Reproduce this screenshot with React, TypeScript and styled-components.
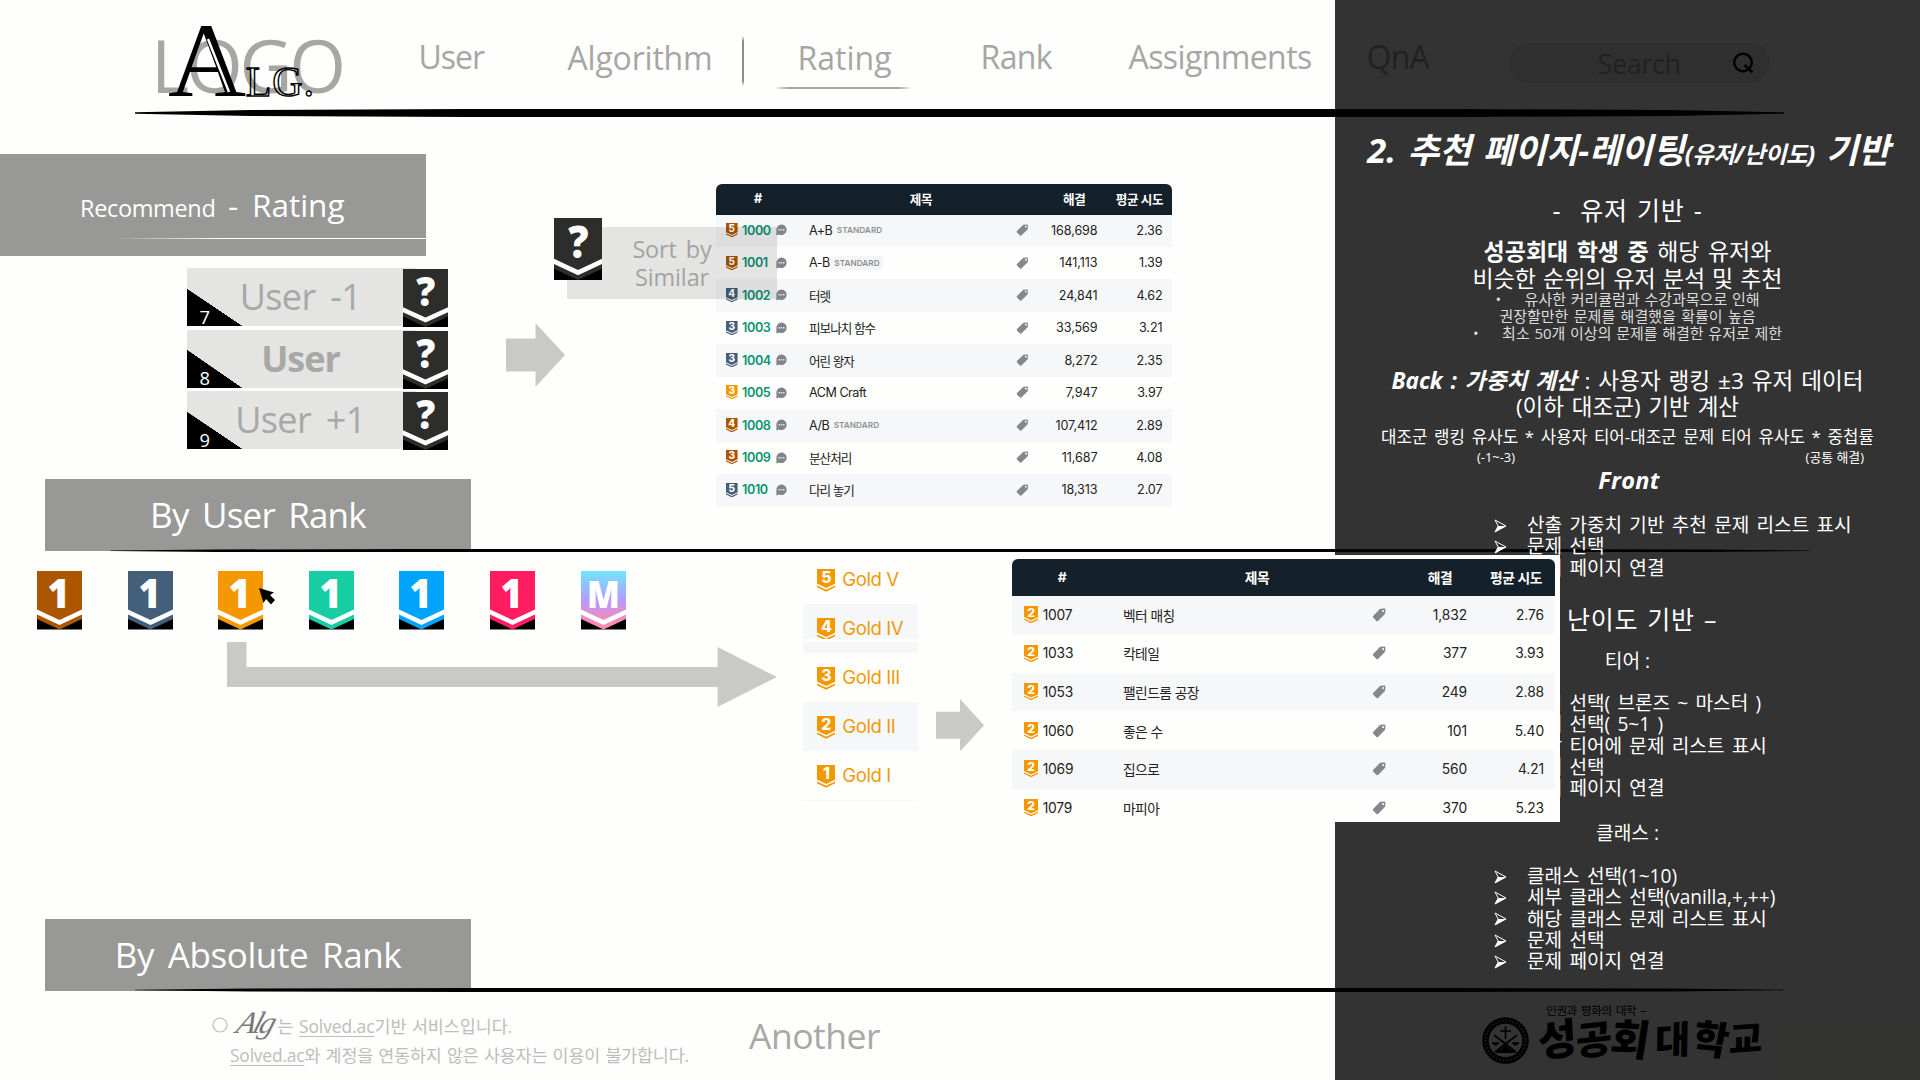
import React from "react";
import styled, { createGlobalStyle } from "styled-components";

const latin = `"Open Sans", "Noto Sans CJK KR", sans-serif`;
const inter = `Inter, "Noto Sans CJK KR", sans-serif`;

const Global = createGlobalStyle`
  * { box-sizing: border-box; }
  body { margin: 0; background: #fefefc; font-family: ${latin}; }
  svg { display: block; flex: none; }
`;

const Slide = styled.div`
  position: relative;
  width: 1920px;
  height: 1080px;
  overflow: hidden;
  background: #fefefc;
  display: flex;
  flex-direction: column;
`;

/* ---------- header ---------- */
const Header = styled.header`
  height: 109px;
  flex: none;
  display: flex;
  align-items: flex-start;
  padding-left: 151px;
`;
const Logo = styled.div`
  position: relative;
  width: 200px;
  height: 109px;
  color: #a6a6a5;
  font-size: 73px;
  line-height: 130px;
  letter-spacing: -3.2px;
  white-space: nowrap;
`;
const LogoMark = styled.div`
  position: absolute;
  left: 17px;
  top: 0;
  display: flex;
  align-items: baseline;
  font-family: "Liberation Serif", serif;
  color: #000;
  line-height: 122px;
  letter-spacing: 0;
`;
const BigA = styled.span`
  font-size: 105px;
  transform: scaleX(1.03);
  transform-origin: left;
`;
const SmallCaps = styled.span`
  font-size: 42px;
  margin-left: 2px;
  letter-spacing: 0.8px;
  color: transparent;
  -webkit-text-stroke: 1.4px #000;
`;
const MarkInline = styled.svg`
  position: absolute;
  left: 32px;
  top: 31px;
`;
const NavItem = styled.a<{ $w: number; $gap: number; $ls?: number; $y?: number }>`
  width: ${(p) => p.$w}px;
  margin-left: ${(p) => p.$gap}px;
  padding-top: ${(p) => 36 + (p.$y ?? 0)}px;
  line-height: 41px;
  font-size: 32px;
  letter-spacing: ${(p) => p.$ls ?? 0}px;
  color: #a6a6a5;
  white-space: nowrap;
`;
const NavDivider = styled.div`
  width: 2px;
  height: 50px;
  margin: 36px 0 0 30px;
  background: linear-gradient(transparent, #8c8c8b 10%, #8c8c8b 90%, transparent);
`;
const ActiveLine = styled.div`
  width: 138px;
  height: 2px;
  margin: 9px 0 0 -24px;
  background: linear-gradient(90deg, transparent, #a6a6a5 10%, #a6a6a5 90%, transparent);
`;
const SearchBox = styled.div`
  width: 261px;
  height: 40px;
  margin: 43px 0 0 76px;
  border-radius: 20px;
  background: #ececeb;
  display: flex;
  align-items: center;
  justify-content: space-between;
  padding: 0 16px 0 89px;
  font-size: 27px;
  letter-spacing: -0.4px;
  color: #a6a6a5;
`;

const Rule: React.FC<{ left: number; width: number; h: number; taper: number }> = ({ left, width, h, taper }) => (
  <RuleSvg $left={left} width={width} height={h} viewBox={`0 0 ${width} ${h}`}>
    <path
      d={`M0 ${h * 0.42} L${taper * 0.35} ${h * 0.14} L${taper} 0 H${width - taper} L${width - taper * 0.35} ${h * 0.14} L${width} ${h * 0.42} V${h * 0.58} L${width - taper * 0.35} ${h * 0.86} L${width - taper} ${h} H${taper} L${taper * 0.35} ${h * 0.86} L0 ${h * 0.58} Z`}
    />
  </RuleSvg>
);
const RuleSvg = styled.svg<{ $left: number }>`
  margin-left: ${(p) => p.$left}px;
`;

/* ---------- banners ---------- */
const PageBanner = styled.div`
  width: 426px;
  height: 102px;
  background: #989896;
  color: #fff;
  display: flex;
  flex-direction: column;
  white-space: nowrap;
`;
const BannerTitle = styled.div`
  display: flex;
  align-items: baseline;
  padding: 31px 0 0 80px;
  font-size: 31.5px;
  line-height: 40px;
`;
const BannerLead = styled.span`
  font-size: 23.5px;
  letter-spacing: -0.35px;
  width: 148px;
`;
const BannerDash = styled.span`
  width: 24px;
`;
const BannerLine = styled.div`
  width: 314px;
  height: 1px;
  margin: 10px 0 0 112px;
  background: linear-gradient(90deg, transparent, #fff 35%);
`;
const SectionBanner = styled.div<{ $ls: number; $ws: number }>`
  width: 426px;
  height: 72px;
  margin-left: 45px;
  flex: none;
  background: #989896;
  color: #fff;
  font-size: 35px;
  line-height: 72px;
  text-align: center;
  letter-spacing: ${(p) => p.$ls}px;
  word-spacing: ${(p) => p.$ws}px;
  white-space: nowrap;
`;

/* ---------- recommendation by user ---------- */
const TopSection = styled.section`
  height: 395px;
  margin-top: 37px;
  flex: none;
  display: flex;
  align-items: flex-start;
`;
const TopLeft = styled.div`
  width: 471px;
  display: flex;
  flex-direction: column;
`;
const UserList = styled.div`
  display: flex;
  flex-direction: column;
  gap: 3.5px;
  margin: 12px 0 30px 187px;
`;
const UserRow = styled.div`
  width: 261px;
  height: 58px;
  display: flex;
  background: linear-gradient(90deg, #e4e4e2 229px, transparent 229px);
`;
const RankCorner = styled.div`
  width: 55px;
  height: 37.5px;
  margin-top: 20.5px;
  background: linear-gradient(to top right, #000 50%, transparent 50.5%);
  color: #fff;
  font-size: 18.4px;
  line-height: 22px;
  padding: 17px 0 0 12.5px;
`;
const UserName = styled.div<{ $strong?: boolean }>`
  width: 161px;
  margin: 0 24px 0 -24px;
  padding-left: 4px;
  text-align: center;
  font-size: 36px;
  line-height: 58px;
  letter-spacing: ${(p) => (p.$strong ? -1 : -0.6)}px;
  word-spacing: 6px;
  font-weight: ${(p) => (p.$strong ? 700 : 400)};
  color: #a8a8a6;
  white-space: nowrap;
`;
const BadgeSlot = styled.div`
  padding-top: 1px;
`;
const SimilarCol = styled.div`
  position: relative;
  width: 245px;
  padding-top: 64px;
`;
const SimilarBadge = styled.div`
  position: relative;
  z-index: 2;
  margin: 0 0 43px 83px;
`;
const SortCard = styled.div`
  position: absolute;
  z-index: 1;
  left: 96px;
  top: 73px;
  width: 210px;
  height: 72px;
  padding: 8px 0 0 0;
  background: rgba(0, 0, 0, 0.1);
  color: #a3a3a2;
  font-size: 23.4px;
  line-height: 28px;
  letter-spacing: -0.1px;
  text-align: center;
  word-spacing: 3px;
`;
const ArrowSlot = styled.div<{ $l?: number; $t?: number }>`
  margin: ${(p) => p.$t ?? 0}px 0 0 ${(p) => p.$l ?? 0}px;
`;

/* ---------- problem tables ---------- */
const Table = styled.div<{ $cols: string; $fs: number; $mt?: number }>`
  display: grid;
  grid-template-columns: ${(p) => p.$cols};
  margin-top: ${(p) => p.$mt ?? 0}px;
  border-radius: 6px 6px 0 0;
  overflow: hidden;
  font-family: ${inter};
  font-size: ${(p) => p.$fs}px;
  color: #222;
  white-space: nowrap;
`;
const Row = styled.div<{ $h: number; $head?: boolean; $shade?: boolean }>`
  grid-column: 1 / -1;
  display: grid;
  grid-template-columns: subgrid;
  align-items: center;
  height: ${(p) => p.$h}px;
  padding-bottom: ${(p) => (p.$head ? 1 : 0.5)}px;
  background: ${(p) => (p.$head ? "#14202a" : p.$shade ? "#f6f7f9" : "transparent")};
  color: ${(p) => (p.$head ? "#fff" : "inherit")};
  font-weight: ${(p) => (p.$head ? 700 : 400)};
`;
const HeadCell = styled.div<{ $l?: number; $r?: number }>`
  text-align: center;
  padding-left: ${(p) => p.$l ?? 0}px;
  padding-right: ${(p) => p.$r ?? 0}px;
  letter-spacing: -0.4px;
`;
const IdCell = styled.div<{ $pad: number; $gap: number }>`
  display: flex;
  align-items: center;
  gap: ${(p) => p.$gap}px;
  padding-left: ${(p) => p.$pad}px;
`;
const SolvedId = styled.span`
  width: 29px;
  color: #0a9373;
  font-weight: 600;
  letter-spacing: -0.4px;
`;
const PlainId = styled.span`
  letter-spacing: -0.2px;
`;
const TitleCell = styled.div<{ $ls: number }>`
  display: flex;
  align-items: center;
  gap: 1.5px;
  letter-spacing: ${(p) => p.$ls}px;
`;
const Std = styled.span<{ $boxed?: boolean }>`
  padding: 2px 3px;
  border-radius: 3px;
  background: ${(p) => (p.$boxed ? "#f4f5f7" : "transparent")};
  color: #8d8f93;
  font-size: 8.2px;
  font-weight: 600;
  letter-spacing: 0.05px;
  line-height: 10px;
`;
const NumCell = styled.div<{ $pad: number }>`
  text-align: right;
  padding-right: ${(p) => p.$pad}px;
  letter-spacing: -0.1px;
`;

/* ---------- recommendation by tier ---------- */
const TierSection = styled.section`
  height: 366px;
  flex: none;
  display: flex;
  align-items: flex-start;
`;
const TierLeft = styled.div`
  width: 803px;
  padding-top: 18px;
`;
const TierRow = styled.div`
  position: relative;
  display: flex;
  gap: 45.6px;
  padding-left: 37px;
`;
const Cursor = styled.svg`
  position: absolute;
  left: 258px;
  top: 16px;
`;
const GoldList = styled.div`
  width: 115px;
  padding-top: 2px;
  border-bottom: 1px solid #f8f8f8;
`;
const GoldRow = styled.div<{ $shade?: boolean; $cut?: boolean }>`
  height: 49.1px;
  display: flex;
  gap: 7px;
  padding: 14px 0 0 14px;
  background: ${(p) =>
    p.$cut
      ? "linear-gradient(#f6f7f9 35px, #fefefc 35px, #fefefc 37.5px, #f7f7f8 37.5px)"
      : p.$shade
        ? "#f6f7f9"
        : "transparent"};
  font-family: ${inter};
  font-size: 18.6px;
  line-height: 20px;
  letter-spacing: -0.45px;
  color: #ef9b0d;
  white-space: nowrap;
`;
const GoldBadge = styled.div<{ $cut?: boolean }>`
  height: ${(p) => (p.$cut ? 21 : 23)}px;
  overflow: hidden;
`;
const TableCard = styled.div`
  position: relative;
  z-index: 3;
  width: 552.4px;
  height: 267px;
  margin: 2px 0 0 24px;
  padding: 4px 5px 0 4px;
  background: #fefefc;
  overflow: hidden;
`;

/* ---------- footer ---------- */
const RuleOverlap = styled.div<{ $up: number; $h: number }>`
  position: relative;
  height: ${(p) => p.$h}px;
  margin-top: ${(p) => -p.$up}px;
  flex: none;
`;
const Footer = styled.footer`
  display: flex;
  height: 88px;
  align-items: flex-start;
`;
const Notice = styled.div`
  width: 749px;
  padding: 19.5px 0 0 212px;
  font-size: 17.4px;
  line-height: 29px;
  color: #bdbdbb;
  white-space: nowrap;
`;
const NoticeLine = styled.div<{ $indent?: number; $ls: number }>`
  display: flex;
  align-items: baseline;
  height: 29px;
  padding-left: ${(p) => p.$indent ?? 0}px;
  letter-spacing: ${(p) => p.$ls}px;
  word-spacing: 1px;
`;
const Ring = styled.svg`
  align-self: center;
  margin: -2px 10px 0 0;
`;
const Script = styled.span`
  width: 39.5px;
  font-family: "Liberation Serif", serif;
  font-style: italic;
  font-size: 31px;
  line-height: 20px;
  letter-spacing: -2.5px;
  color: #7a7a78;
  transform: skewX(-18deg);
`;
const Link = styled.span`
  text-decoration: underline;
  text-underline-offset: 3px;
`;
const Another = styled.div`
  width: 733px;
  padding-top: 22px;
  font-size: 35.5px;
  line-height: 42px;
  letter-spacing: -0.5px;
  color: #a8a8a6;
`;
const School = styled.div`
  display: flex;
  padding-top: 12px;
  gap: 9px;
`;
const SchoolText = styled.div`
  color: #000;
  white-space: nowrap;
`;
const SchoolMotto = styled.div`
  padding-left: 8px;
  font-size: 11.8px;
  line-height: 13px;
  letter-spacing: -0.7px;
  word-spacing: 2px;
  color: #000;
`;
const SchoolName = styled.div`
  display: flex;
  align-items: center;
  height: 44px;
  font-weight: 900;
  line-height: 44px;
  transform: skewX(-5deg);
`;
const Brush = styled.span<{ $fs: number; $rot: number; $w: number }>`
  width: ${(p) => p.$w}px;
  font-size: ${(p) => p.$fs}px;
  transform: rotate(${(p) => p.$rot}deg);
`;

/* ---------- side notes ---------- */
const Notes = styled.aside`
  position: absolute;
  z-index: 2;
  right: 0;
  top: 0;
  width: 585px;
  height: 1080px;
  padding-top: 129px;
  background: rgba(0, 0, 0, 0.8);
  color: #fff;
  text-align: center;
  white-space: pre;
`;
const Line = styled.div<{ $fs: number; $lh: number; $mt?: number; $ls?: number; $ws?: number; $x?: number; $dim?: boolean }>`
  margin-top: ${(p) => p.$mt ?? 0}px;
  padding-left: ${(p) => p.$x ?? 0}px;
  font-size: ${(p) => p.$fs}px;
  line-height: ${(p) => p.$lh}px;
  height: ${(p) => p.$lh}px;
  letter-spacing: ${(p) => p.$ls ?? 0}px;
  word-spacing: ${(p) => p.$ws ?? 0}px;
  color: ${(p) => (p.$dim ? "#dcdcdb" : "#fff")};
`;
const Em = styled.span<{ $fs?: number }>`
  font-weight: 700;
  font-style: italic;
  ${(p) => p.$fs && `font-size: ${p.$fs}px; letter-spacing: -0.4px;`}
`;
const SubNotes = styled.div`
  display: flex;
  justify-content: space-between;
  height: 18px;
  padding: 0 56px 0 142px;
  font-size: 12.9px;
  line-height: 17px;
`;
const List = styled.ul<{ $mt: number; $pitch: number }>`
  list-style: none;
  margin: ${(p) => p.$mt}px 0 0;
  padding: 0 0 0 159px;
  font-size: 19.1px;
  line-height: ${(p) => p.$pitch}px;
  text-align: left;
  word-spacing: 2.3px;
`;
const Item = styled.li`
  display: flex;
  align-items: center;
  gap: 20px;
`;

const Tip = () => (
  <svg width="13" height="14" viewBox="0 0 13 14">
    <path d="M1 1 L12 7 L1 13 L4.2 7 Z" fill="none" stroke="#fff" strokeWidth="1" />
    <path d="M12 7 L1 13 L4.2 7 Z" fill="#fff" />
  </svg>
);

const Bullets: React.FC<{ mt: number; pitch: number; items: string[] }> = ({ mt, pitch, items }) => (
  <List $mt={mt} $pitch={pitch}>
    {items.map((t) => (
      <Item key={t}>
        <Tip />
        {t}
      </Item>
    ))}
  </List>
);

/* ---------- drawings ---------- */
const badgeLabel: Record<string, { size: number; weight: number; x: number }> = {
  "1": { size: 41, weight: 800, x: 21.5 },
  "?": { size: 41, weight: 800, x: 22.8 },
  M: { size: 37, weight: 800, x: 22.5 },
};

const TierBadge: React.FC<{ fill: string; label: string; w?: number; h?: number }> = ({
  fill,
  label,
  w = 45,
  h = 58.5,
}) => (
  <svg width={w} height={h} viewBox="0 0 45 58.5" preserveAspectRatio="none">
    <defs>
      <linearGradient id="master" x1="0" y1="0" x2="0" y2="1">
        <stop offset="0" stopColor="#6fe6ff" />
        <stop offset="0.5" stopColor="#b39bff" />
        <stop offset="0.8" stopColor="#f08cc0" />
        <stop offset="1" stopColor="#ff8aa8" />
      </linearGradient>
    </defs>
    <rect y="30" width="45" height="28.5" fill="#000" />
    <path d="M0 0H45V48L22.5 58.5L0 48Z" fill={fill} />
    <path d="M0 38.5L22.5 49L45 38.5V43.5L22.5 54L0 43.5Z" fill="#fff" />
    <text
      x={badgeLabel[label].x / 0.92}
      y="37.3"
      transform="scale(0.92 1)"
      textAnchor="middle"
      fontFamily="Open Sans, sans-serif"
      fontWeight={badgeLabel[label].weight}
      fontSize={badgeLabel[label].size}
      fill="#fff"
    >
      {label}
    </text>
  </svg>
);

const MiniBadge: React.FC<{ fill: string; n: number; w: number; h: number }> = ({ fill, n, w, h }) => (
  <svg width={w} height={h} viewBox="0 0 18 23" preserveAspectRatio="none">
    <path d="M0 0H18V14.6L9 19L0 14.6Z" fill={fill} />
    <path d="M0 16.4L9 20.8L18 16.4V18.2L9 22.8L0 18.2Z" fill={fill} />
    <text x="9" y="14.4" textAnchor="middle" fontFamily="Inter, sans-serif" fontWeight="800" fontSize="15.5" fill="#fff">
      {n}
    </text>
  </svg>
);

const TagIcon = styled.svg<{ $dx: number }>`
  margin-left: ${(p) => p.$dx}px;
`;
const Tag: React.FC<{ s: number; dx: number }> = ({ s, dx }) => (
  <TagIcon $dx={dx} width={s} height={s} viewBox="0 0 13 13">
    <path
      fillRule="evenodd"
      d="M7.6 0.8 L11.4 0.5 Q12.5 0.5 12.5 1.6 L12.2 5.4 L5.6 12 Q4.9 12.6 4.2 12 L1 8.8 Q0.4 8.1 1 7.4 Z M10.3 1.8 a0.95 0.95 0 1 0 0.01 0Z"
      fill="#85878c"
    />
  </TagIcon>
);

const Bubble = () => (
  <svg width="11" height="12" viewBox="0 0 11 12">
    <path d="M5.5 0.5a5.2 5.2 0 1 1-2.3 9.9L0.4 11.4V5.7A5.2 5.2 0 0 1 5.5 0.5Z" fill="#818389" />
    <path d="M2.6 5.1h1.5v1.5H2.6zM4.8 5.1h1.5v1.5H4.8zM7 5.1h1.5v1.5H7z" fill="#e4e4e6" />
  </svg>
);

const BlockArrow: React.FC<{ w: number; h: number; shaft: number }> = ({ w, h, shaft }) => (
  <svg width={w} height={h} viewBox={`0 0 ${w} ${h}`}>
    <path
      d={`M0 ${(h - shaft) / 2}H${w / 2}V0L${w} ${h / 2}L${w / 2} ${h}V${(h + shaft) / 2}H0Z`}
      fill="#c9c9c8"
    />
  </svg>
);

const BRONZE = "#ad5600";
const SILVER = "#435f7a";
const GOLD = "#f39800";

type Solved = [string, number, number, string, string, string, (0 | 1 | 2)?];
const solved: Solved[] = [
  [BRONZE, 5, 1000, "A+B", "168,698", "2.36", 1],
  [BRONZE, 5, 1001, "A-B", "141,113", "1.39", 2],
  [SILVER, 4, 1002, "터렛", "24,841", "4.62"],
  [SILVER, 3, 1003, "피보나치 함수", "33,569", "3.21"],
  [SILVER, 3, 1004, "어린 왕자", "8,272", "2.35"],
  [GOLD, 3, 1005, "ACM Craft", "7,947", "3.97"],
  [BRONZE, 4, 1008, "A/B", "107,412", "2.89", 1],
  [BRONZE, 3, 1009, "분산처리", "11,687", "4.08"],
  [SILVER, 5, 1010, "다리 놓기", "18,313", "2.07"],
];

const goldProblems: [number, string, string, string][] = [
  [1007, "벡터 매칭", "1,832", "2.76"],
  [1033, "칵테일", "377", "3.93"],
  [1053, "팰린드롬 공장", "249", "2.88"],
  [1060, "좋은 수", "101", "5.40"],
  [1069, "집으로", "560", "4.21"],
  [1079, "마피아", "370", "5.23"],
];

const users: [number, string][] = [
  [7, "User -1"],
  [8, "User"],
  [9, "User +1"],
];

const tiers: [string, string][] = [
  [BRONZE, "1"],
  [SILVER, "1"],
  [GOLD, "1"],
  ["#17cda4", "1"],
  ["#00a4fc", "1"],
  ["#ff1c60", "1"],
  ["url(#master)", "M"],
];

const golds: [number, string][] = [
  [5, "V"],
  [4, "IV"],
  [3, "III"],
  [2, "II"],
  [1, "I"],
];

const schoolGlyphs: [string, number, number, number][] = [
  ["성", 42, -8, 38],
  ["공", 39, -6, 35],
  ["회", 42, 4, 44],
  ["대", 38, -4, 38],
  ["학", 39, 6, 36],
  ["교", 36, -4, 34],
];

const Seal = () => (
  <svg width="47" height="47" viewBox="0 0 47 47">
    <circle cx="23.5" cy="23.5" r="20" fill="none" stroke="#000" strokeWidth="6.5" />
    <circle cx="23.5" cy="23.5" r="20" fill="none" stroke="#777" strokeWidth="2.6" strokeDasharray="1.6 2" />
    <path
      d="M23.5 9V22M18 14H29M12 18L34 35M35 18L13 35M10 26H17M30 26H37M15 35H32L23.5 26Z"
      fill="none"
      stroke="#000"
      strokeWidth="1.6"
    />
    <path d="M15 36H32L23.5 28ZM9.5 26H17.5L13.5 29ZM29.5 26H37.5L33.5 29Z" fill="#000" />
  </svg>
);

export default function App() {
  return (
    <Slide>
      <Global />
      <Header>
        <Logo>
          LOGO
          <LogoMark>
            <BigA>A</BigA>
            <SmallCaps>LG.</SmallCaps>
            <MarkInline width="40" height="64" viewBox="0 0 40 64">
              <path d="M8 8L29 61" stroke="#fefefc" strokeWidth="2.4" />
            </MarkInline>
          </LogoMark>
        </Logo>
        <NavItem $w={66} $gap={67.5} $ls={-1}>User</NavItem>
        <NavItem $w={144} $gap={83} $ls={-0.2} $y={1}>Algorithm</NavItem>
        <NavDivider />
        <NavItem $w={92} $gap={54} $y={1}>
          Rating
          <ActiveLine />
        </NavItem>
        <NavItem $w={72} $gap={91} $ls={-0.6}>Rank</NavItem>
        <NavItem $w={184} $gap={76} $ls={-0.6}>Assignments</NavItem>
        <NavItem $w={66} $gap={54} $ls={-0.7}>QnA</NavItem>
        <SearchBox>
          Search
          <svg width="22" height="22" viewBox="0 0 22 22">
            <circle cx="11" cy="10.5" r="8.8" fill="none" stroke="#000" strokeWidth="2.4" />
            <path d="M12.5 13L20.5 20.5" stroke="#000" strokeWidth="2.6" />
          </svg>
        </SearchBox>
      </Header>
      <Rule left={135} width={1649} h={8} taper={330} />

      <TopSection>
        <TopLeft>
          <PageBanner>
            <BannerTitle>
              <BannerLead>Recommend</BannerLead>
              <BannerDash>-</BannerDash>
              Rating
            </BannerTitle>
            <BannerLine />
          </PageBanner>
          <UserList>
            {users.map(([rank, name]) => (
              <UserRow key={rank}>
                <RankCorner>{rank}</RankCorner>
                <UserName $strong={rank === 8}>{name}</UserName>
                <BadgeSlot>
                  <TierBadge fill="#2d2d2c" label="?" h={58} />
                </BadgeSlot>
              </UserRow>
            ))}
          </UserList>
          <SectionBanner $ls={-0.8} $ws={5}>By User Rank</SectionBanner>
        </TopLeft>
        <SimilarCol>
          <SimilarBadge>
            <TierBadge fill="#2d2d2c" label="?" w={48} h={62} />
          </SimilarBadge>
          <SortCard>
            Sort by
            <br />
            Similar
          </SortCard>
          <ArrowSlot $l={35}>
            <BlockArrow w={59} h={64} shaft={33} />
          </ArrowSlot>
        </SimilarCol>
        <Table $cols="93px 202px 26px 60.5px 74px" $fs={12.6} $mt={30}>
          <Row $h={30.5} $head>
            <HeadCell $r={9}>#</HeadCell>
            <HeadCell $l={22}>제목</HeadCell>
            <div />
            <HeadCell $l={14}>해결</HeadCell>
            <HeadCell $l={10}>평균 시도</HeadCell>
          </Row>
          {solved.map(([c, lv, id, title, cnt, avg, std], i) => (
            <Row key={id} $h={32.45} $shade={i % 2 === 0}>
              <IdCell $pad={10} $gap={4.5}>
                <MiniBadge fill={c} n={lv} w={11.6} h={14.5} />
                <SolvedId>{id}</SolvedId>
                <Bubble />
              </IdCell>
              <TitleCell $ls={title.charCodeAt(0) > 255 ? -1 : -0.5}>
                {title}
                {std ? <Std $boxed={std === 2}>STANDARD</Std> : null}
              </TitleCell>
              <Tag s={12.5} dx={5} />
              <NumCell $pad={0}>{cnt}</NumCell>
              <NumCell $pad={9}>{avg}</NumCell>
            </Row>
          ))}
        </Table>
      </TopSection>
      <RuleOverlap $up={0} $h={4}>
        <Rule left={108} width={1704} h={3.4} taper={300} />
      </RuleOverlap>

      <TierSection>
        <TierLeft>
          <TierRow>
            {tiers.map(([fill, label]) => (
              <TierBadge key={fill} fill={fill} label={label} />
            ))}
            <Cursor width="18" height="18" viewBox="0 0 18 18">
              <path d="M1 1L16 5.5L12 8L17 13L13 17.5L8 12L5.5 16Z" fill="#000" />
            </Cursor>
          </TierRow>
          <ArrowSlot $l={227} $t={12.5}>
            <svg width="550" height="65" viewBox="0 0 550 65">
              <path d="M0 0H19.5V25H490.5V5L550 35L490.5 65V45H0Z" fill="#c9c9c8" />
            </svg>
          </ArrowSlot>
        </TierLeft>
        <GoldList>
          {golds.map(([n, roman]) => (
            <GoldRow key={n} $shade={n % 2 === 0} $cut={n === 4}>
              <GoldBadge $cut={n === 4}>
                <MiniBadge fill={GOLD} n={n} w={18.3} h={23} />
              </GoldBadge>
              Gold {roman}
            </GoldRow>
          ))}
        </GoldList>
        <ArrowSlot $l={18} $t={146}>
          <BlockArrow w={48} h={52.5} shaft={27} />
        </ArrowSlot>
        <TableCard>
          <Table $cols="111px 250px 26px 68px 88px" $fs={13.8}>
            <Row $h={36.7} $head>
              <HeadCell $r={11}>#</HeadCell>
              <HeadCell $l={18}>제목</HeadCell>
              <div />
              <HeadCell $l={14}>해결</HeadCell>
              <HeadCell $l={10}>평균 시도</HeadCell>
            </Row>
            {goldProblems.map(([id, title, cnt, avg], i) => (
              <Row key={id} $h={38.6} $shade={i % 2 === 0}>
                <IdCell $pad={11.5} $gap={5}>
                  <MiniBadge fill={GOLD} n={2} w={14.2} h={17.5} />
                  <PlainId>{id}</PlainId>
                </IdCell>
                <TitleCell $ls={-0.6}>{title}</TitleCell>
                <Tag s={14} dx={-1} />
                <NumCell $pad={0}>{cnt}</NumCell>
                <NumCell $pad={11}>{avg}</NumCell>
              </Row>
            ))}
          </Table>
        </TableCard>
      </TierSection>

      <SectionBanner $ls={-0.4} $ws={5}>By Absolute Rank</SectionBanner>
      <RuleOverlap $up={3} $h={4}>
        <Rule left={135} width={1649} h={4} taper={330} />
      </RuleOverlap>
      <Footer>
        <Notice>
          <NoticeLine $ls={-0.05}>
            <Ring width="16" height="16" viewBox="0 0 16 16">
              <circle cx="8" cy="8" r="7" fill="none" stroke="#bdbdbb" strokeWidth="1.2" />
            </Ring>
            <Script>Alg</Script>는&nbsp;<Link>Solved.ac</Link>기반 서비스입니다.
          </NoticeLine>
          <NoticeLine $indent={18} $ls={-0.18}>
            <Link>Solved.ac</Link>
            <span>와 계정을 연동하지 않은 사용자는 이용이 불가합니다.</span>
          </NoticeLine>
        </Notice>
        <Another>Another</Another>
        <School>
          <ArrowSlot $t={13}>
            <Seal />
          </ArrowSlot>
          <SchoolText>
            <SchoolMotto>인권과 평화의 대학 –</SchoolMotto>
            <SchoolName>
              {schoolGlyphs.map(([g, fs, rot, w]) => (
                <Brush key={g} $fs={fs} $rot={rot} $w={w}>
                  {g}
                </Brush>
              ))}
            </SchoolName>
          </SchoolText>
        </School>
      </Footer>

      <Notes>
        <Line $fs={34.6} $lh={41} $ws={2.5} $x={2}>
          <Em>2. 추천 페이지-레이팅</Em>
          <Em $fs={23.4}>(유저/난이도)</Em>
          <Em> 기반</Em>
        </Line>
        <Line $fs={25} $lh={32} $mt={24} $ws={2.5} $ls={0.6}>-  유저 기반 -</Line>
        <Line $fs={23} $lh={26.5} $mt={12} $ws={2.5}>
          <b>성공회대 학생 중</b> 해당 유저와
        </Line>
        <Line $fs={23} $lh={26} $ws={1}>비슷한 순위의 유저 분석 및 추천</Line>
        <Line $fs={15} $lh={17.2} $ws={0.8} $dim>•     유사한 커리큘럼과 수강과목으로 인해</Line>
        <Line $fs={15} $lh={17.2} $ws={1.5} $dim>권장할만한 문제를 해결했을 확률이 높음</Line>
        <Line $fs={15} $lh={17.2} $ws={0.8} $dim>•     최소 50개 이상의 문제를 해결한 유저로 제한</Line>
        <Line $fs={22.6} $lh={26} $mt={26} $ws={2}>
          <Em>Back : 가중치 계산</Em> : 사용자 랭킹 ±3 유저 데이터
        </Line>
        <Line $fs={22.5} $lh={26} $ws={2}>(이하 대조군) 기반 계산</Line>
        <Line $fs={16.8} $lh={24} $mt={5} $ws={2.4}>
          대조군 랭킹 유사도 * 사용자 티어-대조군 문제 티어 유사도 * 중첩률
        </Line>
        <SubNotes>
          <span>(-1~-3)</span>
          <span>(공통 해결)</span>
        </SubNotes>
        <Line $fs={23.5} $lh={27} $ls={0.3} $x={3}>
          <Em>Front</Em>
        </Line>
        <Bullets mt={21} pitch={21.4} items={["산출 가중치 기반 추천 문제 리스트 표시", "문제 선택", "문제 페이지 연결"]} />
        <Line $fs={25} $lh={32} $mt={24} $ws={2} $ls={0.7} $x={2}>-  난이도 기반 –</Line>
        <Line $fs={19.2} $lh={24} $mt={13.5}>티어 :</Line>
        <Bullets
          mt={20.5}
          pitch={21.2}
          items={["티어 선택( 브론즈 ~ 마스터 )", "단계 선택( 5~1 )", "해당 티어에 문제 리스트 표시", "문제 선택", "문제 페이지 연결"]}
        />
        <Line $fs={19.2} $lh={24} $mt={21.5}>클래스 :</Line>
        <Bullets
          mt={21}
          pitch={21.4}
          items={["클래스 선택(1~10)", "세부 클래스 선택(vanilla,+,++)", "해당 클래스 문제 리스트 표시", "문제 선택", "문제 페이지 연결"]}
        />
      </Notes>
    </Slide>
  );
}
